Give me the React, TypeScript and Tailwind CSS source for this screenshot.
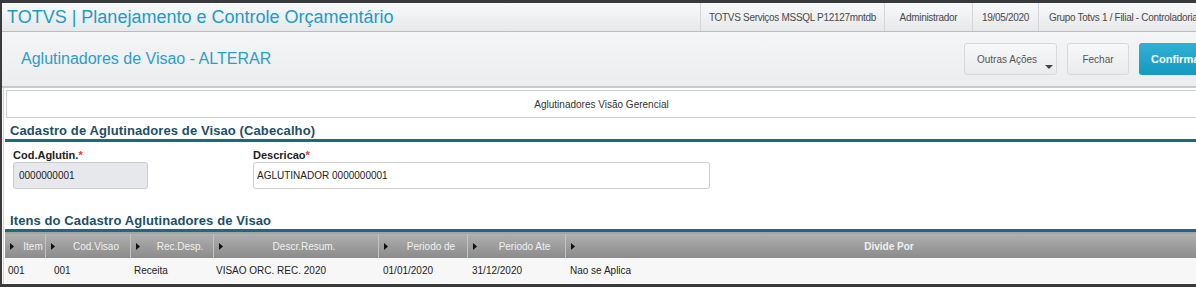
import { FC } from "react";

const infos = [
  { t: "TOTVS Serviços MSSQL P12127mntdb", w: "w-[184px] justify-center" },
  { t: "Administrador", w: "w-[88px] justify-center" },
  { t: "19/05/2020", w: "w-[66px] justify-center" },
  { t: "Grupo Totvs 1 / Filial - Controladoria", w: "w-[170px] pl-[10px]" },
];

const cols = [
  { label: "Item", w: "w-[41px]", pad: "pl-[3px]", cell: "001" },
  { label: "Cod.Visao", w: "w-[85px]", pad: "pl-[8px]", cell: "001" },
  { label: "Rec.Desp.", w: "w-[83px]", pad: "pl-[3px]", cell: "Receita" },
  { label: "Descr.Resum.", w: "w-[165px]", pad: "pl-[2px]", cell: "VISAO ORC. REC. 2020" },
  { label: "Periodo de", w: "w-[89px]", pad: "pl-[4px]", cell: "01/01/2020" },
  { label: "Periodo Ate", w: "w-[98px]", pad: "pl-[4px]", cell: "31/12/2020" },
  { label: "Divide Por", w: "flex-1", pad: "pl-[4px]", cell: "Nao se Aplica" },
];

const Arrow: FC = () => (
  <svg width="4" height="7" viewBox="0 0 4 7" className="shrink-0">
    <path d="M0 0 L4 3.5 L0 7 Z" fill="#111" />
  </svg>
);

const SectionTitle: FC<{ text: string }> = ({ text }) => (
  <div className="border-b-[3px] border-[#1c6a80] pl-[5px]">
    <span className="block text-[13px] leading-[16px] font-bold text-[#1d4f66] tracking-[0.1px]">{text}</span>
  </div>
);

const App: FC = () => {
  return (
    <div className="w-[1196px] h-[287px] overflow-hidden bg-[#3a3a3a] pt-[3px] pl-[2px] pb-[3px] font-['Liberation_Sans',Arial,sans-serif]">
      <div className="h-full bg-white flex flex-col overflow-hidden">
        {/* top bar */}
        <div className="h-[29px] shrink-0 flex items-center bg-gradient-to-b from-[#f8f9fa] to-[#e6e8ea] border-b border-[#b9bdc0]">
          <span className="pl-[5px] text-[18px] text-[#1d9cc6] leading-none whitespace-nowrap">
            TOTVS | Planejamento e Controle Orçamentário
          </span>
          <div className="ml-auto flex h-full items-stretch mr-[-12px]">
            {infos.map((s) => (
              <div
                key={s.t}
                className={
                  s.w +
                  " flex items-center border-l border-[#d3d6d8] text-[10px] tracking-[-0.3px] text-[#4a4a4a] whitespace-nowrap overflow-hidden"
                }
              >
                {s.t}
              </div>
            ))}
          </div>
        </div>

        {/* page title */}
        <div className="h-[56px] shrink-0 flex items-center bg-gradient-to-b from-[#f4f5f6] to-[#ebedee] border-b-2 border-[#c7c9cb]">
          <span className="pl-[19px] text-[16px] text-[#2a9fc9] whitespace-nowrap">Aglutinadores de Visao - ALTERAR</span>
          <div className="ml-auto flex gap-[10px] items-center whitespace-nowrap">
            <button className="relative w-[93px] h-[32px] rounded-[3px] border border-[#d6d8da] bg-gradient-to-b from-[#f7f8f9] to-[#e9ebec] text-[10px] text-[#555] text-left pl-[12px]">
              Outras Ações
              <span className="absolute right-[3px] bottom-[5px] w-0 h-0 border-l-[4px] border-r-[4px] border-t-[4px] border-l-transparent border-r-transparent border-t-[#444]" />
            </button>
            <button className="w-[62px] h-[32px] rounded-[3px] border border-[#d6d8da] bg-gradient-to-b from-[#f7f8f9] to-[#e9ebec] text-[10px] text-[#555]">
              Fechar
            </button>
            <button className="w-[80px] h-[32px] rounded-l-[3px] bg-gradient-to-b from-[#2fb0d4] to-[#159ac0] text-[11px] font-bold text-white text-left pl-[12px] mr-[-23px]">
              Confirmar
            </button>
          </div>
        </div>

        {/* content */}
        <div className="flex-1 flex flex-col pl-[1px] pt-[2px] border-l border-[#d0d0d0] ml-[1px]">
          <div className="h-[28px] shrink-0 ml-[1px] flex items-center justify-center border border-r-0 border-[#cfcfcf] text-[10px] text-[#333]">
            Aglutinadores Visão Gerencial
          </div>

          <div className="mt-[5px]">
            <SectionTitle text="Cadastro de Aglutinadores de Visao (Cabecalho)" />
          </div>

          <div className="flex gap-[105px] pl-[8px] pt-[7px] shrink-0">
            <div className="flex flex-col">
              <span className="text-[11px] font-bold text-[#222] leading-[13px]">
                Cod.Aglutin.<span className="text-[#e33]">*</span>
              </span>
              <div className="w-[135px] h-[27px] flex items-center pl-[5px] rounded-[3px] border border-[#c9ccd0] bg-[#e7e8eb] text-[10px] text-[#222]">
                0000000001
              </div>
            </div>
            <div className="flex flex-col">
              <span className="text-[11px] font-bold text-[#222] leading-[13px]">
                Descricao<span className="text-[#e33]">*</span>
              </span>
              <div className="w-[457px] h-[27px] flex items-center pl-[3px] rounded-[3px] border border-[#c9ccd0] bg-white text-[10px] text-[#222]">
                AGLUTINADOR 0000000001
              </div>
            </div>
          </div>

          <div className="mt-[24px]">
            <SectionTitle text="Itens do Cadastro Aglutinadores de Visao" />
          </div>

          <div className="flex h-[26px] shrink-0 bg-gradient-to-b from-[#b0b0b0] to-[#8b8b8b] border-t-2 border-[#a4a4a4]">
            {cols.map((c) => (
              <div key={c.label} className={c.w + " flex items-center pl-[5px] border-r border-[#c2c2c2] last:border-r-0"}>
                <Arrow />
                <span
                  className={
                    "flex-1 pl-[7px] text-center text-[10px] text-[#f0f0f0] whitespace-nowrap " +
                    (c.label === "Divide Por" ? "font-bold" : "")
                  }
                >
                  {c.label}
                </span>
              </div>
            ))}
          </div>
          <div className="flex h-[25px] shrink-0 bg-[#f7f7f7]">
            {cols.map((c) => (
              <div key={c.label} className={c.w + " " + c.pad + " flex items-center text-[10px] text-[#222] whitespace-nowrap"}>
                {c.cell}
              </div>
            ))}
          </div>
        </div>
      </div>
    </div>
  );
};

export default App;
